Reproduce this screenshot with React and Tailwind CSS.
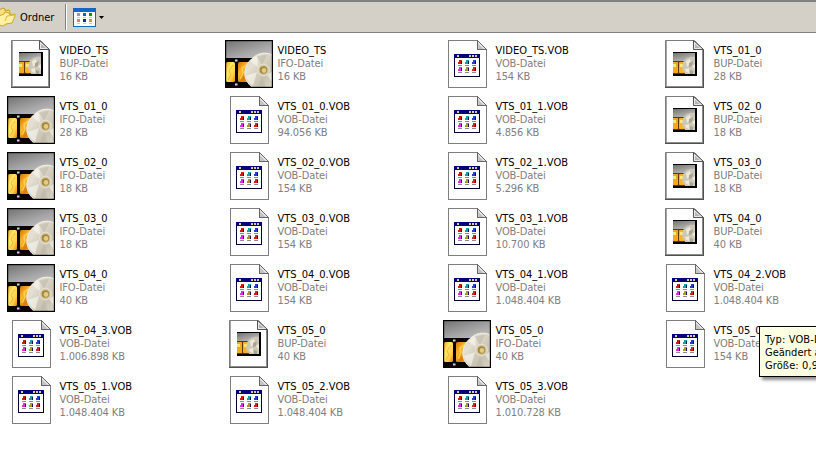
const files = [
  ['VIDEO_TS', 'BUP', '16'], ['VIDEO_TS', 'IFO', '16'], ['VIDEO_TS.VOB', 'VOB', '154'], ['VTS_01_0', 'BUP', '28'],
  ['VTS_01_0', 'IFO', '28'], ['VTS_01_0.VOB', 'VOB', '94.056'], ['VTS_01_1.VOB', 'VOB', '4.856'], ['VTS_02_0', 'BUP', '18'],
  ['VTS_02_0', 'IFO', '18'], ['VTS_02_0.VOB', 'VOB', '154'], ['VTS_02_1.VOB', 'VOB', '5.296'], ['VTS_03_0', 'BUP', '18'],
  ['VTS_03_0', 'IFO', '18'], ['VTS_03_0.VOB', 'VOB', '154'], ['VTS_03_1.VOB', 'VOB', '10.700'], ['VTS_04_0', 'BUP', '40'],
  ['VTS_04_0', 'IFO', '40'], ['VTS_04_0.VOB', 'VOB', '154'], ['VTS_04_1.VOB', 'VOB', '1.048.404'], ['VTS_04_2.VOB', 'VOB', '1.048.404'],
  ['VTS_04_3.VOB', 'VOB', '1.006.898'], ['VTS_05_0', 'BUP', '40'], ['VTS_05_0', 'IFO', '40'], ['VTS_05_0.VOB', 'VOB', '154'],
  ['VTS_05_1.VOB', 'VOB', '1.048.404'], ['VTS_05_2.VOB', 'VOB', '1.048.404'], ['VTS_05_3.VOB', 'VOB', '1.010.728'],
];

function SharedDefs() {
  return (
    <svg className="absolute h-0 w-0" aria-hidden="true">
      <defs>
        <linearGradient id="wall" x1="0" y1="0" x2="0.3" y2="1">
          <stop offset="0" stopColor="#707070" />
          <stop offset="0.38" stopColor="#a8a8a8" />
          <stop offset="0.6" stopColor="#c0c0c0" />
        </linearGradient>
        <linearGradient id="frameA" x1="0" y1="0" x2="1" y2="1">
          <stop offset="0" stopColor="#f4a41c" />
          <stop offset="0.35" stopColor="#ffe868" />
          <stop offset="0.7" stopColor="#ffd048" />
          <stop offset="1" stopColor="#e88410" />
        </linearGradient>
        <linearGradient id="frameB" x1="0" y1="0" x2="1" y2="1">
          <stop offset="0" stopColor="#d87408" />
          <stop offset="0.35" stopColor="#f8b830" />
          <stop offset="0.6" stopColor="#dc7c08" />
          <stop offset="1" stopColor="#f8b838" />
        </linearGradient>
        <linearGradient id="disc" x1="0" y1="0" x2="1" y2="1">
          <stop offset="0" stopColor="#d8d4c8" />
          <stop offset="0.3" stopColor="#e4e0d4" />
          <stop offset="0.5" stopColor="#d4cebe" />
          <stop offset="0.7" stopColor="#c8c2b2" />
          <stop offset="1" stopColor="#dcd6c8" />
        </linearGradient>
      </defs>
    </svg>
  );
}

function IfoIcon() {
  return (
    <svg className="h-12 w-12 shrink-0" viewBox="0 0 48 48">
      <rect width="48" height="48" fill="url(#wall)" />
      <rect y="18" width="30" height="30" fill="#080604" />
      <rect x="1" y="22" width="9" height="20" rx="1.5" fill="url(#frameA)" />
      <rect x="13" y="22" width="15" height="20" rx="1.5" fill="url(#frameB)" />
      <path d="M3 40l3-5-2-4 4-6" stroke="#f0a428" fill="none" opacity="0.7" />
      <path d="M15 39l3-6-1-5 4-3" stroke="#ffd850" strokeWidth="1.5" fill="none" opacity="0.8" />
      <path d="M10 19.5h2.5v2H10zM10 43.5h2.5v2H10z" fill="#d4d4d4" />
      <path d="M48 16C44 12 35 12 29 17 22 22 19 29 20 36c1 5 4 9 8 12h20z" fill="url(#disc)" stroke="#f4f0e6" />
      <path d="M37 25L32 16.500q5-2 10-1.500z" fill="#b8b2a2" opacity="0.5" />
      <path d="M33 27L25 21q3-4 7-5z" fill="#fffdf4" opacity="0.5" />
      <path d="M32 32L21 36q2 7 7 10z" fill="#fffdf6" opacity="0.55" />
      <path d="M37 36L33 48h8z" fill="#b4ae9e" opacity="0.4" />
      <path d="M42 35l6 8V31z" fill="#fffdf4" opacity="0.5" />
      <circle cx="38.5" cy="30" r="5.8" fill="#cfc7aa" stroke="#efeadb" strokeWidth="0.8" />
      <circle cx="38.5" cy="30" r="3.8" fill="#a8862c" />
      <circle cx="39" cy="30.5" r="2.4" fill="#dccb8c" />
      <rect x="0.5" y="0.5" width="47" height="47" fill="none" stroke="#000" strokeWidth="1.4" />
    </svg>
  );
}

function BupIcon() {
  return (
    <svg className="h-12 w-12 shrink-0" viewBox="0 0 48 48">
      <path d="M4.500 .5h29l9 9v38h-38z" fill="#fff" stroke="#7c7c7c" />
      <path d="M5.500 1v46" stroke="#a4a4a4" />
      <path d="M5 46.500h38M41.500 10v37" stroke="#8c8c8c" />
      <path d="M4 47.500h39M42.500 10v38" stroke="#505050" />
      <path d="M32.500 .5v9h10z" fill="#e8e8e8" stroke="#555" />
      <path d="M34 4v4h5z" fill="#b4b4b4" />
      <rect x="12" y="12" width="24" height="24" fill="#000" />
      <rect x="12" y="13" width="22" height="21" fill="url(#wall)" />
      <path d="M12 21h12v13H12z" fill="#5a3808" />
      <rect x="12" y="22" width="5" height="11" fill="#f6a81c" />
      <rect x="18" y="22" width="8" height="11" rx="1" fill="#f8b424" />
      <path d="M19 24h4v3h-4zM12 24h3v3h-3z" fill="#ffe878" />
      <path d="M34 17c-6-1-11 2-12 6l-1 5c1 3 2 5 4 6h9z" fill="#cdc7b6" />
      <path d="M25 21l4-2 1 4-4 4zM24 29l4-1v5l-3-1zM31 26l3-2v6z" fill="#eeeadb" />
      <path d="M28 23l4-2-1 5-3 1zM29 30l3 1v3h-3z" fill="#aaa391" />
    </svg>
  );
}

const dots = [
  [15, 21, '#d01818'], [22, 21, '#18a0a8'], [29, 21, '#2040d0'],
  [15, 28, '#f028e0'], [22, 28, '#a8a010'], [29, 28, '#d82020'],
];

function VobIcon() {
  return (
    <svg className="h-12 w-12 shrink-0" viewBox="0 0 48 48" shapeRendering="crispEdges">
      <path d="M5.500 .5h29l9 9v38h-38z" fill="#fff" stroke="#7e7e7e" />
      <path d="M34.500 .5v9h9z" fill="#e4e4e4" stroke="#666" />
      <path d="M35 4v5h5z" fill="#c4c4c4" />
      <rect x="11" y="14" width="26" height="23" fill="#000030" />
      <rect x="12" y="18" width="24" height="18" fill="#fff" />
      <rect x="11" y="14" width="26" height="4" fill="#000078" />
      <path d="M14 15h2v2h-2zM26 15h2v2h-2zM29 15h2v2h-2zM32 15h2v2h-2z" fill="#d8cf98" />
      {dots.map(([x, y, color]) => (
        <g key={`${x}-${y}`}>
          <rect x={x + 1} y={y - 1} width="3" height="4" fill={color} />
          <rect x={x} y={y + 1} width="2" height="2" fill={color} />
          <rect x={x + 3} y={y} width="1" height="3" fill="#101050" />
          <rect x={x} y={y + 4} width="4" height="1" fill="#8c8c8c" />
        </g>
      ))}
    </svg>
  );
}

const icons = { BUP: BupIcon, IFO: IfoIcon, VOB: VobIcon };

function FileTile({ name, type, size }) {
  const Icon = icons[type];
  return (
    <div className="flex h-12 gap-[4.5px]">
      <Icon />
      <div className="pt-1 tracking-[-0.12px] whitespace-nowrap leading-[13px] text-[#808080]">
        <div className="tracking-[0.03px] text-black">{name}</div>
        <div>{type}-Datei</div>
        <div>{size} KB</div>
      </div>
    </div>
  );
}

function FolderIcon() {
  return (
    <svg className="h-[20px] w-4 shrink-0" viewBox="0 0 16 20">
      <path d="M-1 3l4-2 2 1v2l4-1 1 2v9l-8 4h-3z" fill="#f9e27a" stroke="#c99c20" />
      <path d="M-1 9l5-2 1-2 4 1 1 2 5-1v2l-3 7-6 1-3 2-4-1z" fill="#fff2a4" stroke="#d0a428" />
      <path d="M5 14l2-5 8-1" fill="none" stroke="#e0b83c" />
    </svg>
  );
}

function ViewsIcon() {
  return (
    <svg className="h-[19px] w-[23px]" viewBox="0 0 23 19" shapeRendering="crispEdges">
      <rect width="23" height="19" fill="#1069c9" />
      <rect x="1" y="4" width="21" height="14" fill="#fff" />
      <path d="M4 5h3v3H4z" fill="#9a94c4" />
      <path d="M10 5h3v3h-3z" fill="#1060d0" />
      <path d="M16 5h3v3h-3z" fill="#109018" />
      <path d="M4 11h3v3H4z" fill="#e08058" />
      <path d="M10 11h3v3h-3z" fill="#102c90" />
      <path d="M16 11h3v3h-3z" fill="#c8a010" />
      <path d="M4 9h3v1H4zM10 9h3v1h-3zM16 9h3v1h-3zM4 15h3v1H4zM10 15h3v1h-3zM16 15h3v1h-3z" fill="#c8ccd8" />
    </svg>
  );
}

export default function App() {
  return (
    <div className="relative flex h-[453px] w-[816px] flex-col overflow-hidden bg-white font-['DejaVu_Sans_Condensed','DejaVu_Sans',sans-serif] text-[11px] [font-stretch:condensed]">
      <SharedDefs />
      <header className="flex h-[33px] shrink-0 items-center border-t-2 border-b border-t-[#808080] border-b-[#808080] bg-[#d4d0c8]">
        <FolderIcon />
        <span className="ml-1 w-[41px] leading-[13px] text-black">Ordner</span>
        <div className="ml-1 h-[26px] w-[2px] border-r border-l border-r-white border-l-[#808080]" />
        <div className="ml-[6px] flex items-center gap-[3px]">
          <ViewsIcon />
          <svg className="h-[3px] w-[5px]" viewBox="0 0 5 3"><path d="M0 0h5L2.500 3z" /></svg>
        </div>
      </header>
      <main className="grid grid-cols-[repeat(4,218px)] gap-y-2 pt-[7px] pl-[7px]">
        {files.map(([name, type, size]) => (
          <FileTile key={`${name}-${type}`} name={name} type={type} size={size} />
        ))}
      </main>
      <div className="absolute top-[326px] left-[759px] h-[51px] w-[150px] border border-black bg-[#ffffe1] pt-[6px] pl-[5px] leading-[13px] whitespace-nowrap text-black shadow-[3px_3px_3px_rgba(0,0,0,0.45)]">
        <div className="tracking-[0.15px]">Typ: VOB-Datei</div>
        <div>Geändert am</div>
        <div className="tracking-[0.1px]">Größe: 0,98 MB</div>
      </div>
    </div>
  );
}
